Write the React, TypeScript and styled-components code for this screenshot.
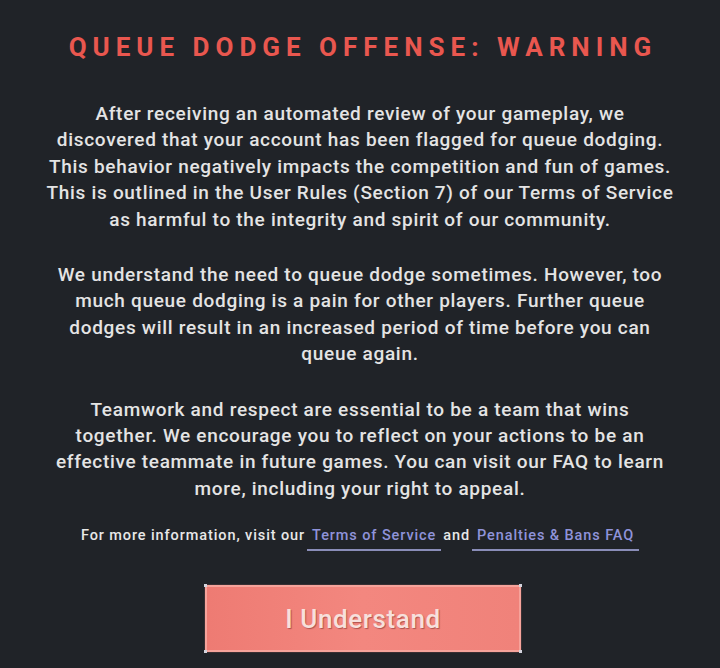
import React from 'react';
import styled, { createGlobalStyle } from 'styled-components';

const GlobalStyle = createGlobalStyle`
  html, body {
    margin: 0;
    padding: 0;
    background: #202328;
  }
  body {
    font-family: Roboto, "Liberation Sans", sans-serif;
    -webkit-font-smoothing: antialiased;
  }
`;

const Panel = styled.div`
  width: 720px;
  height: 668px;
  box-sizing: border-box;
  padding: 32px 0 0;
  display: flex;
  flex-direction: column;
  align-items: center;
  background: #202328;
  color: #e6e6e6;
`;

const Title = styled.h1`
  margin: 0 0 39px 6px;
  font-size: 26px;
  font-weight: 700;
  letter-spacing: 6px;
  color: #e9574f;
  line-height: 30px;
`;

const Body = styled.div`
  display: flex;
  flex-direction: column;
  gap: 29px;
  text-align: center;
`;

const Paragraph = styled.p`
  margin: 0;
  font-size: 19px;
  line-height: 26.4px;
  font-weight: 500;
  letter-spacing: 0.7px;
  color: #e4e4e4;
`;

const Footnote = styled.div`
  margin-top: 25px;
  font-size: 14.5px;
  font-weight: 500;
  letter-spacing: 0.9px;
  color: #e8e8e8;
  display: flex;
  align-items: baseline;
  gap: 2px;
`;

const Link = styled.a`
  color: #8f93da;
  text-decoration: none;
  padding: 0 5px 5px;
  border-bottom: 2px solid #8a8db8;
`;

const Button = styled.button`
  position: relative;
  margin: 34px 0 0 6px;
  width: 316px;
  height: 67px;
  border: 2px solid #f6a39b;
  outline: 1px solid #3a2f33;
  background: linear-gradient(90deg, #ee7b73 0%, #f3877f 50%, #f0827a 100%);
  color: #f7e0dc;
  font-family: Roboto, "Liberation Sans", sans-serif;
  font-size: 26px;
  font-weight: 500;
  letter-spacing: 0.6px;
  text-shadow: 1px 1px 1px rgba(130, 50, 48, 0.6);
  cursor: pointer;
`;

const Corner = styled.span<{ $top?: boolean; $left?: boolean }>`
  position: absolute;
  width: 3px;
  height: 3px;
  background: #d4d4de;
  ${p => (p.$top ? 'top: -3px;' : 'bottom: -3px;')}
  ${p => (p.$left ? 'left: -3px;' : 'right: -3px;')}
`;

export default function App() {
  return (
    <>
      <GlobalStyle />
      <Panel>
        <Title>QUEUE DODGE OFFENSE: WARNING</Title>
        <Body>
          <Paragraph>
            After receiving an automated review of your gameplay, we<br />
            discovered that your account has been flagged for queue dodging.<br />
            This behavior negatively impacts the competition and fun of games.<br />
            This is outlined in the User Rules (Section 7) of our Terms of Service<br />
            as harmful to the integrity and spirit of our community.
          </Paragraph>
          <Paragraph>
            We understand the need to queue dodge sometimes. However, too<br />
            much queue dodging is a pain for other players. Further queue<br />
            dodges will result in an increased period of time before you can<br />
            queue again.
          </Paragraph>
          <Paragraph>
            Teamwork and respect are essential to be a team that wins<br />
            together. We encourage you to reflect on your actions to be an<br />
            effective teammate in future games. You can visit our FAQ to learn<br />
            more, including your right to appeal.
          </Paragraph>
        </Body>
        <Footnote>
          <span>For more information, visit our</span>
          <Link href="#">Terms of Service</Link>
          <span>and</span>
          <Link href="#">Penalties &amp; Bans FAQ</Link>
        </Footnote>
        <Button>
          I Understand
          <Corner $top $left />
          <Corner $top />
          <Corner $left />
          <Corner />
        </Button>
      </Panel>
    </>
  );
}
